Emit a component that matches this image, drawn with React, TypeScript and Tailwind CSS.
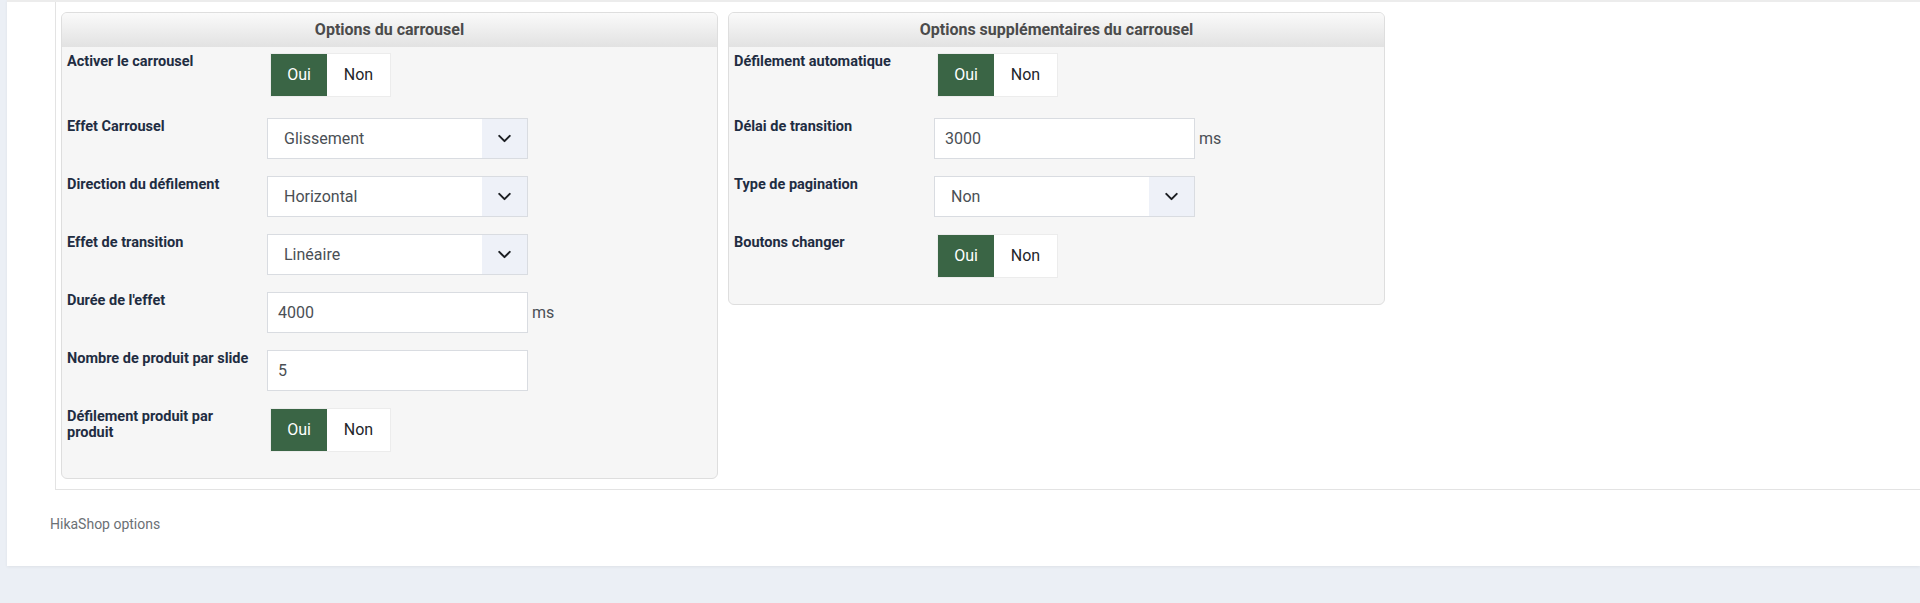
import type { ReactNode } from "react";

type Row =
  | { label: string; kind: "toggle" }
  | { label: string; kind: "select"; value: string }
  | { label: string; kind: "input"; value: string; unit?: string };

const carousel: Row[] = [
  { label: "Activer le carrousel", kind: "toggle" },
  { label: "Effet Carrousel", kind: "select", value: "Glissement" },
  { label: "Direction du défilement", kind: "select", value: "Horizontal" },
  { label: "Effet de transition", kind: "select", value: "Linéaire" },
  { label: "Durée de l'effet", kind: "input", value: "4000", unit: "ms" },
  { label: "Nombre de produit par slide", kind: "input", value: "5" },
  { label: "Défilement produit par produit", kind: "toggle" },
];

const extra: Row[] = [
  { label: "Défilement automatique", kind: "toggle" },
  { label: "Délai de transition", kind: "input", value: "3000", unit: "ms" },
  { label: "Type de pagination", kind: "select", value: "Non" },
  { label: "Boutons changer", kind: "toggle" },
];

function Toggle() {
  return (
    <div className="ml-[4px] mt-[1px] mb-[5px] flex h-[42px] text-[16px] shadow-[0_0_0_1px_#ececec]">
      <span className="flex w-[56px] items-center justify-center bg-[#3a6545] text-white">Oui</span>
      <span className="flex w-[63px] items-center justify-center bg-white text-[#22262a]">Non</span>
    </div>
  );
}

function Select({ value }: { value: string }) {
  return (
    <div className="flex h-[41px] w-[261px] border border-[#d9dce1] bg-white text-[16px] text-[#4a4f55]">
      <span className="flex flex-1 items-center pl-[16px]">{value}</span>
      <span className="flex w-[45px] items-center justify-center bg-[#eef1f8]">
        <svg width="21" height="21" viewBox="0 0 24 24" fill="none" stroke="#1b1e22" strokeWidth="2.3" strokeLinecap="round" strokeLinejoin="round">
          <path d="M6 9l6 6 6-6" />
        </svg>
      </span>
    </div>
  );
}

function Input({ value, unit }: { value: string; unit?: string }) {
  return (
    <div className="flex items-center">
      <div className="flex h-[41px] w-[261px] items-center border border-[#d9dce1] bg-white pl-[10px] text-[16px] text-[#4a4f55]">
        {value}
      </div>
      {unit && <span className="ml-[4px] text-[16px] text-[#4a4f55]">{unit}</span>}
    </div>
  );
}

function Field({ row }: { row: Row }) {
  let control: ReactNode;
  if (row.kind === "toggle") control = <Toggle />;
  else if (row.kind === "select") control = <Select value={row.value} />;
  else control = <Input value={row.value} unit={row.unit} />;

  return (
    <div className="flex items-start">
      <div className="w-[200px] pr-[14px] pt-[1px] text-[14.5px] font-bold leading-[16px] text-[#1f2d42]">
        {row.label}
      </div>
      {control}
    </div>
  );
}

function Panel({ title, rows }: { title: string; rows: Row[] }) {
  return (
    <div className="w-[657px] overflow-hidden rounded-[6px] border border-[#dedede] bg-[#f6f6f6]">
      <div className="flex h-[34px] items-center justify-center bg-gradient-to-b from-[#fafafa] to-[#e2e2e2] text-[16px] font-bold text-[#4b4b4b]">
        {title}
      </div>
      <div className="flex flex-col gap-[17px] px-[5px] pt-[6px] pb-[22px]">
        {rows.map((r) => (
          <Field key={r.label} row={r} />
        ))}
      </div>
    </div>
  );
}

export default function App() {
  return (
    <div className="h-[603px] overflow-hidden bg-[#ebeff5] pl-[7px] font-[family-name:Roboto,'Liberation_Sans',sans-serif]">
      <div className="h-[566px] border-t-2 border-[#ececec] bg-white shadow-[0_1px_3px_rgba(0,0,0,0.06)]">
        <div className="ml-[48px] border-b border-l border-[#e3e3e3] pt-[10px] pb-[10px] pl-[5px]">
          <div className="flex items-start gap-[10px]">
            <Panel title="Options du carrousel" rows={carousel} />
            <Panel title="Options supplémentaires du carrousel" rows={extra} />
          </div>
        </div>
        <div className="pl-[43px] pt-[25px] text-[14px] leading-[18px] text-[#6b7075]">HikaShop options</div>
      </div>
    </div>
  );
}
